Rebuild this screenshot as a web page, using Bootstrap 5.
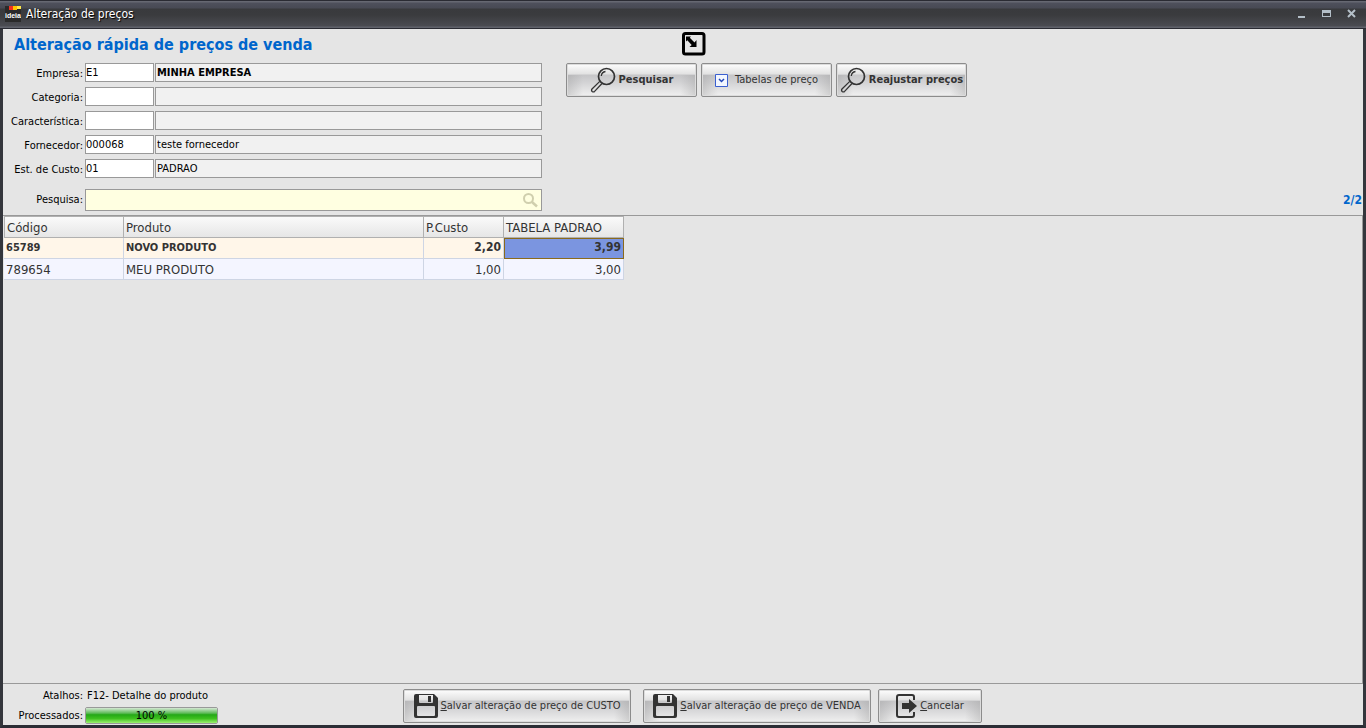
<!DOCTYPE html>
<html lang="pt-BR">
<head>
<meta charset="utf-8">
<meta name="viewport" content="width=device-width, initial-scale=1">
<title>Alteração de preços</title>
<link href="https://cdn.jsdelivr.net/npm/bootstrap@5.3.0/dist/css/bootstrap.min.css" rel="stylesheet">
<style>
  body { font-family: "DejaVu Sans Condensed", "Noto Sans", sans-serif; font-size: 11px; line-height: 14px; color: #000; background: #2b2d35; }
  .app-window { background: #e5e5e5; border: solid #34363c; border-width: 0 3px 3px; border-bottom-color: #2b2d35; }
  .title-strip { height: 29px; margin: 0 -3px; padding: 0 2px 2px 5px; color: #fff; font-size: 12px; border-top: 1px solid #2a2b33; border-bottom: 1px solid #2a2b33;
    background: linear-gradient(#666872 0 1px, #4e505c 2px, #484a54 7px, #393a3d 8px, #3a3b3e 14px, #4b4c52 25px, #60626b 26px); }
  .title-strip .caption { text-shadow: 1px 1px 1px #000; margin-left: 5px; }
  .win-btn { border: 0; background: none; padding: 0; width: 25px; height: 16px; color: #b4bfc8; display: flex; align-items: center; justify-content: center; }
  .page-title { font-size: 16px; line-height: 20px; font-weight: 700; color: #0066cc; margin: 6px 0 8px 11px; }
  .form-side { width: 539px; }
  .lookup { display: grid; grid-template-columns: 80px 69px 1fr; column-gap: 2px; row-gap: 5px; align-items: center; }
  .lookup label { text-align: right; padding-top: 2px; }
  .lookup input, .search-box input { border: 1px solid #999; border-radius: 0; padding: 0 1px 1px; height: 19px; color: #000; font-size: 11px; min-width: 0; outline: 0; }
  .lookup .code { background: #fff; padding-left: 0; }
  .lookup .desc { background: #f1f1f1; margin-left: -1px; }
  .search-box { display: grid; grid-template-columns: 80px 1fr; column-gap: 2px; align-items: center; margin-top: 11px; }
  .search-box input { height: 22px; background: #ffffe1; width: 100%; }
  .search-box svg { right: 4px; top: 3px; }
  .collapse-mark { margin: 3px 0 7px 116px; }
  .glossy { height: 34px; border: 1px solid #8c8c8c; border-radius: 2px; padding: 0; color: #333; font-size: 11px; line-height: 14px; white-space: nowrap;
    display: flex; align-items: center; justify-content: center; gap: 3px;
    box-shadow: inset 0 0 0 1px #dcdcdc;
    background: linear-gradient(90deg, #9c9c9c60, #9c9c9c00 16px calc(100% - 16px), #9c9c9c60) 0 11px no-repeat, linear-gradient(#fdfdfd, #e2e2e2 10px, #c6c6c8 11px, #d2d2d4 18px, #f0f0f0); }
  .glossy.tool { width: 131px; }
  .glossy.save { width: 228px; }
  .glossy.leave { width: 104px; }
  .save-gap { margin: 0 7px 0 12px; }
  .counter { color: #0066cc; font-weight: 700; font-size: 12px; padding: 0 1px 4px 0; }
  .grid-area { border: 1px solid #999; border-width: 1px 1px 1px 0; min-height: 0; overflow: auto; }
  .price-grid { width: 620px; table-layout: fixed; border-collapse: separate; border-spacing: 0; font-size: 13px; line-height: 15px; color: #333; margin: 0 0 0 1px; }
  .price-grid th { font-weight: 400; height: 22px; padding: 0 2px; border: solid #b0b0b0; border-width: 1px 1px 1px 0; background: linear-gradient(#fafafa, #e6e6e6); }
  .price-grid th:first-child { border-left-width: 1px; }
  .price-grid td { height: 21px; padding: 0 2px; border: solid #ced5e4; border-width: 0 1px 1px 0; background: #f4f5ff; }
  .price-grid .current td { font-weight: 700; background: #fff6e9; font-size: 11px; padding-bottom: 2px; }
  .price-grid .current .text-end { font-size: 12px; }
  .price-grid .current td.focused { background: #7b95e0; border: 1px solid #8a6a1c; }
  .foot-bar { height: 41px; padding-top: 5px; }
  .foot-info { width: 400px; }
  .foot-info .tag { width: 80px; text-align: right; }
  .done-meter { width: 133px; height: 17px; margin-left: 2px; border-radius: 2px; border: 1px solid #999; font-size: 11px; background: #e5e5e5; }
  .done-meter .progress-bar { color: #000; overflow: visible; background: linear-gradient(#d5e8d4, #5cba56 35%, #24a816 45%, #3ec01f 70%, #9cf270); }
</style>
</head>
<body>
<svg class="d-none">
  <symbol id="lens" viewBox="0 0 26 26"><g fill="none" stroke="#333"><circle cx="16.500" cy="9.500" r="8" stroke-width="1.700"/><path d="M9.800 14.400 2 22q-1 1.300.2 2.400 1.200 1 2.400 0L12 16.500M11.300 9q.4-4 4.200-4.500" stroke-width="1.300"/></g></symbol>
  <symbol id="disk" viewBox="0 0 24 24"><path fill="#333" fill-rule="evenodd" d="M2 0h18l4 4v18q0 2-2 2H2q-2 0-2-2V2q0-2 2-2zM5 1v7q0 1 1 1h12q1 0 1-1V1zM4 12q-1 0-1 1v8q0 1 1 1h16q1 0 1-1v-8q0-1-1-1zM14 2h3v6h-3z"/></symbol>
</svg>
<div class="app-window d-flex flex-column vh-100">
  <header class="title-strip d-flex align-items-center flex-shrink-0">
    <svg width="16" height="16" viewBox="0 0 16 16" aria-hidden="true"><path fill="#2a2a2a" d="M0 0h16v16H0z"/><path fill="#f03020" d="M4 0h4v4H4z"/><path fill="#ffc400" d="M8 0h4v4H8z"/><path fill="#ffe84a" d="M12 0h4v3h-4z"/><text x="0" y="12" font-size="7" font-weight="700" font-family="Liberation Sans, sans-serif" fill="#fff">ideia</text></svg>
    <span class="caption">Alteração de preços</span>
    <div class="ms-auto d-flex">
      <button class="win-btn" type="button" aria-label="Minimizar"><svg width="9" height="9"><path fill="currentColor" d="M1 7h7v2H1z"/></svg></button>
      <button class="win-btn" type="button" aria-label="Maximizar"><svg width="9" height="7"><path fill="currentColor" fill-rule="evenodd" d="M0 0h9v7H0zM1 3h7v3H1z"/></svg></button>
      <button class="win-btn" type="button" aria-label="Fechar"><svg width="9" height="9"><path stroke="currentColor" stroke-width="2" d="M1 1l7 7M8 1l-7 7"/></svg></button>
    </div>
  </header>

  <section class="d-flex flex-shrink-0 pb-1">
    <form class="form-side">
      <h1 class="page-title">Alteração rápida de preços de venda</h1>
      <div class="lookup">
        <label for="emp">Empresa:</label><input class="code" id="emp" value="E1"><input class="desc fw-bold" aria-label="Nome da empresa" value="MINHA EMPRESA" readonly>
        <label for="cat">Categoria:</label><input class="code" id="cat"><input class="desc" aria-label="Nome da categoria" readonly>
        <label for="car">Característica:</label><input class="code" id="car"><input class="desc" aria-label="Nome da característica" readonly>
        <label for="for">Fornecedor:</label><input class="code" id="for" value="000068"><input class="desc" aria-label="Nome do fornecedor" value="teste fornecedor" readonly>
        <label for="est">Est. de Custo:</label><input class="code" id="est" value="01"><input class="desc" aria-label="Nome da estrutura de custo" value="PADRAO" readonly>
      </div>
      <div class="search-box">
        <label class="text-end" for="pesq">Pesquisa:</label>
        <div class="position-relative d-flex"><input id="pesq" type="text"><svg class="position-absolute" width="16" height="16" viewBox="0 0 16 16"><g fill="none" stroke="#d0cfae" stroke-width="2"><circle cx="6.500" cy="6.500" r="4.500"/><path d="m10 10 5 4.500" stroke-width="2.500"/></g></svg></div>
      </div>
    </form>
    <div class="ms-4">
      <svg class="collapse-mark d-block" width="24" height="24" viewBox="0 0 24 24" role="img" aria-label="Recolher"><rect x="1.500" y="1.500" width="20.500" height="20.500" rx="2" fill="none" stroke="#000" stroke-width="3"/><path d="M4 4.500h5L7.800 5.700l4.700 4.800L14.500 8v7h-7l2.200-2-4.400-4.700L4 9.500z"/></svg>
      <div class="d-flex gap-1">
        <button class="glossy tool fw-bold" type="button"><svg width="26" height="26"><use href="#lens"/></svg><span>Pesquisar</span></button>
        <button class="glossy tool" type="button"><svg width="13" height="13"><path fill="#f2f6ff" stroke="#3a5fd0" d="M.5.5h12v12H.5z"/><path fill="none" stroke="#2146b8" stroke-width="1.500" d="m4 5 2.500 2.500L9 5"/></svg><span class="ms-1">Tabelas de preço</span></button>
        <button class="glossy tool fw-bold" type="button"><svg width="26" height="26"><use href="#lens"/></svg><span>Reajustar preços</span></button>
      </div>
    </div>
    <div class="counter ms-auto align-self-end">2/2</div>
  </section>

  <main class="grid-area flex-grow-1">
    <table class="price-grid">
      <colgroup><col style="width:120px"><col style="width:300px"><col style="width:80px"><col style="width:120px"></colgroup>
      <thead><tr><th>Código</th><th>Produto</th><th>P.Custo</th><th>TABELA PADRAO</th></tr></thead>
      <tbody>
        <tr class="current"><td>65789</td><td>NOVO PRODUTO</td><td class="text-end">2,20</td><td class="text-end focused">3,99</td></tr>
        <tr><td>789654</td><td>MEU PRODUTO</td><td class="text-end">1,00</td><td class="text-end">3,00</td></tr>
      </tbody>
    </table>
  </main>

  <footer class="foot-bar d-flex flex-shrink-0">
    <div class="foot-info">
      <div class="d-flex mb-1"><span class="tag">Atalhos:</span><span class="ms-1">F12- Detalhe do produto</span></div>
      <div class="d-flex align-items-center"><span class="tag">Processados:</span>
        <div class="progress done-meter" role="progressbar" aria-label="Processados" aria-valuenow="100" aria-valuemin="0" aria-valuemax="100"><div class="progress-bar" style="width:100%">100 %</div></div></div>
    </div>
    <div class="d-flex">
      <button class="glossy save" type="button"><svg width="24" height="24"><use href="#disk"/></svg><span><u>S</u>alvar alteração de preço de CUSTO</span></button>
      <button class="glossy save save-gap" type="button"><svg width="24" height="24"><use href="#disk"/></svg><span><u>S</u>alvar alteração de preço de VENDA</span></button>
      <button class="glossy leave" type="button"><svg width="21" height="24" viewBox="0 0 21 24"><path fill="none" stroke="#333" stroke-width="2" d="M18 6V3q0-2-2-2H3Q1 1 1 3v18q0 2 2 2h13q2 0 2-2v-3"/><path fill="#333" d="M6 9h7V5l8 7-8 7v-4H6z"/></svg><span><u>C</u>ancelar</span></button>
    </div>
  </footer>
</div>
<script src="https://cdn.jsdelivr.net/npm/bootstrap@5.3.0/dist/js/bootstrap.bundle.min.js"></script>
</body>
</html>
